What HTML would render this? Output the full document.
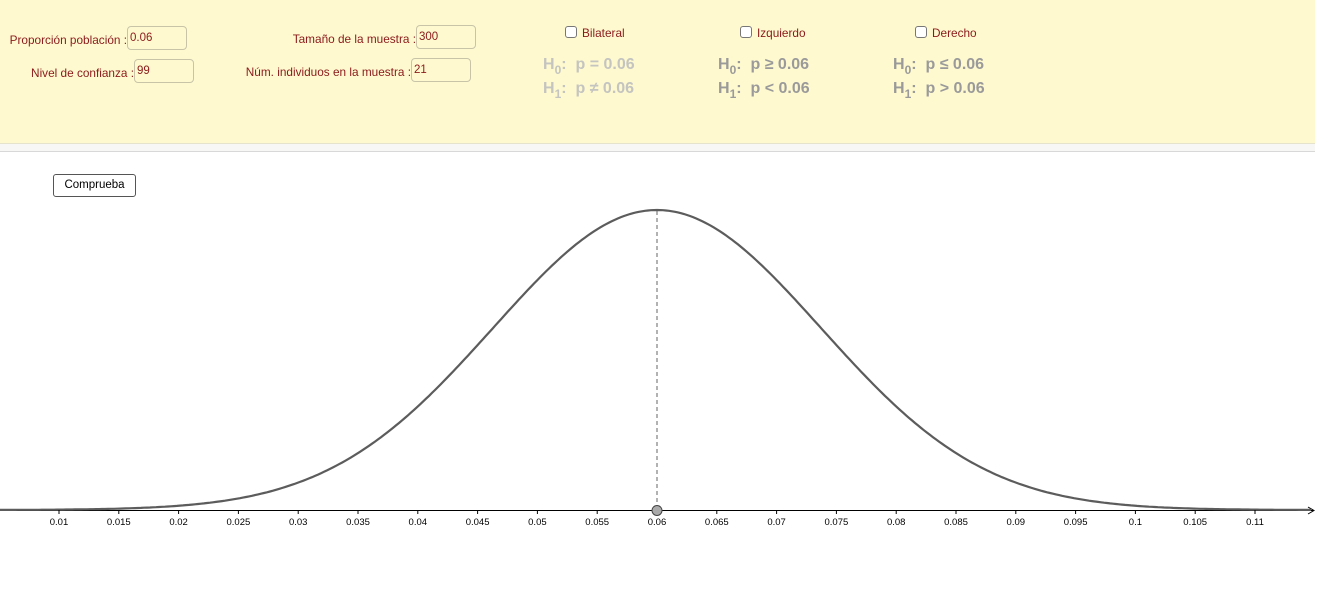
<!DOCTYPE html>
<html><head><meta charset="utf-8"><style>
body{margin:0;width:1317px;height:603px;background:#fff;font-family:"Liberation Sans",sans-serif;position:relative;overflow:hidden}
#top{position:absolute;left:0;top:0;width:1315px;height:143px;background:#fef9cf}
#strip{position:absolute;left:0;top:143px;width:1315px;height:7px;background:#f7f7f5;border-top:1px solid #e6e3cc;border-bottom:1px solid #d8d8d8}
.l{position:absolute;font-size:11.8px;color:#8b1a1a;white-space:nowrap}
.r{text-align:right}
.in{position:absolute;height:24px;border:1px solid #c8c4a8;border-radius:4px;box-sizing:border-box;font-size:11.5px;color:#8b1a1a;padding:6px 2px;line-height:11px}
.cb{position:absolute;width:12px;height:12px;border:1.5px solid #777;border-radius:3px;background:#fff;box-sizing:border-box}
.h{position:absolute;font-size:16px;font-weight:bold;color:#9a9a9a;white-space:nowrap}
.h sub{font-size:12px;vertical-align:-5px;line-height:0}
#btn{position:absolute;left:53px;top:174px;width:83px;height:23px;border:1px solid #555;border-radius:3px;box-sizing:border-box;font-size:11.5px;text-align:center;line-height:21px;background:#fff}
</style></head><body>
<div id="top"></div><div id="strip"></div>
<div class="l r" style="right:1190px;top:33px">Proporción población :</div>
<div class="in" style="left:127px;top:26px;width:60px">0.06</div>
<div class="l r" style="right:1183px;top:66px">Nivel de confianza :</div>
<div class="in" style="left:134px;top:59px;width:60px">99</div>
<div class="l r" style="right:901px;top:32px">Tamaño de la muestra :</div>
<div class="in" style="left:416px;top:25px;width:60px">300</div>
<div class="l r" style="right:906px;top:65px">Núm. individuos en la muestra :</div>
<div class="in" style="left:411px;top:58px;width:60px">21</div>
<div class="cb" style="left:565px;top:26px"></div><div class="l" style="left:582px;top:26px">Bilateral</div>
<div class="cb" style="left:740px;top:26px"></div><div class="l" style="left:757px;top:26px">Izquierdo</div>
<div class="cb" style="left:915px;top:26px"></div><div class="l" style="left:932px;top:26px">Derecho</div>
<div class="h" style="left:543px;top:56px;color:#c4c4c0">H<sub>0</sub>:&nbsp; p = 0.06</div>
<div class="h" style="left:543px;top:80px;color:#c4c4c0">H<sub>1</sub>:&nbsp; p ≠ 0.06</div>
<div class="h" style="left:718px;top:56px">H<sub>0</sub>:&nbsp; p ≥ 0.06</div>
<div class="h" style="left:718px;top:80px">H<sub>1</sub>:&nbsp; p &lt; 0.06</div>
<div class="h" style="left:893px;top:56px">H<sub>0</sub>:&nbsp; p ≤ 0.06</div>
<div class="h" style="left:893px;top:80px">H<sub>1</sub>:&nbsp; p &gt; 0.06</div>
<div id="btn">Comprueba</div>
<svg id="g" width="1317" height="603" style="position:absolute;left:0;top:0">
<line x1="0" y1="510.5" x2="1313" y2="510.5" stroke="#000" stroke-width="1"/>
<path d="M1308 507 L1314 510.5 L1308 514" fill="none" stroke="#000" stroke-width="1"/>
<line x1="657" y1="211" x2="657" y2="510" stroke="#666" stroke-dasharray="4,3"/>
<path id="c" fill="none" stroke="#5c5c5c" stroke-width="2.2"/>
<g id="t" font-family="Liberation Sans" font-size="9.5" text-anchor="middle" fill="#000"></g>
<circle cx="657" cy="510.5" r="5" fill="#aaa" stroke="#444" stroke-width="1"/>
</svg>
<script>
var d="",s=164;
for(var x=0;x<=1313;x+=3){var z=(x-657)/s;var y=510-300*Math.exp(-z*z/2);d+=(x?"L":"M")+x+" "+y.toFixed(1);}
document.getElementById("c").setAttribute("d",d);
var t="";
for(var i=2;i<=22;i++){var p=i*0.005;var x=59+(p-0.01)*11960;var lab=(Math.round(p*1000)/1000).toString();
t+='<line x1="'+x+'" y1="510" x2="'+x+'" y2="514" stroke="#000"/><text x="'+x+'" y="525">'+lab+'</text>';}
document.getElementById("t").innerHTML=t;
</script>
</body></html>
